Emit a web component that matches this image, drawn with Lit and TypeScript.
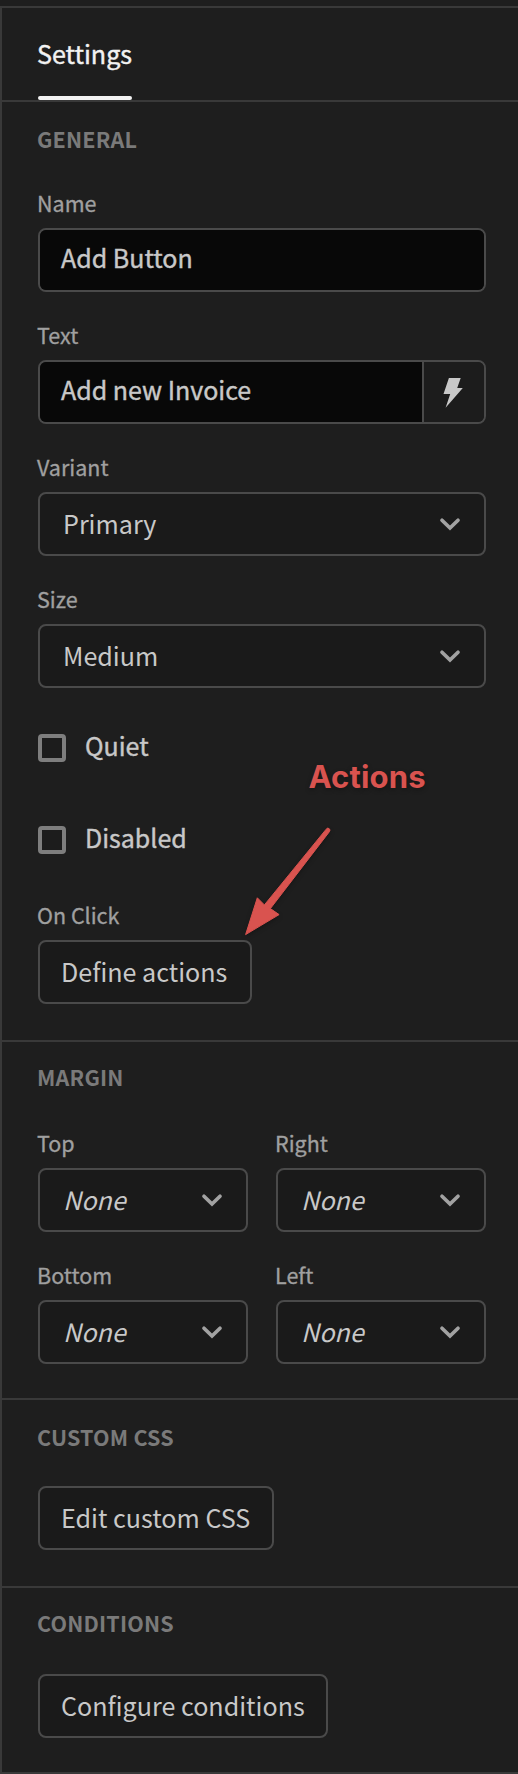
import { LitElement, html, css } from "lit";
import { customElement, property } from "lit/decorators.js";

const chevron = html`<svg class="chevron" width="22" height="14" viewBox="0 0 22 14">
  <path d="M3 3.2 L11 11 L19 3.2" fill="none" stroke="#a2a2a2" stroke-width="3.7" stroke-linecap="round" stroke-linejoin="miter"/>
</svg>`;

const field = css`
  :host { display: block; }
  .label {
    height: 31px;
    margin: 0 0 10px -1px;
    font-size: 21.5px;
    line-height: 31px;
    color: #a0a0a0;
    -webkit-text-stroke: 0.3px #a0a0a0;
    white-space: nowrap;
  }
  .box {
    box-sizing: border-box;
    display: flex;
    height: 64px;
    border: 2px solid #4a4a4a;
    border-radius: 8px;
    overflow: hidden;
    color: #c8c8c8;
    font-size: 25.1px;
    white-space: nowrap;
  }
`;

@customElement("text-field")
class TextField extends LitElement {
  @property() label = "";
  @property() value = "";
  @property({ type: Boolean }) bindable = false;
  static styles = [field, css`
    .value {
      flex: 1;
      background: #080808;
      padding-left: 21px;
      font-size: 25px;
      line-height: 54px;
      -webkit-text-stroke: 0.4px #c8c8c8;
    }
    .bind {
      display: flex;
      box-sizing: border-box;
      width: 62px;
      border-left: 2px solid #4a4a4a;
      background: #1c1c1c;
      padding: 16px 0 0 19px;
    }
  `];
  render() {
    return html`<div class="label">${this.label}</div>
      <div class="box">
        <div class="value">${this.value}</div>
        ${this.bindable ? html`<div class="bind">
          <svg width="20" height="30" viewBox="0 0 20 30"><path d="M5.9 0 H17.7 L14.2 10 H19.8 L2.6 29.8 L7.2 16 H0.5 Z" fill="#c8c8c8"/></svg>
        </div>` : ""}
      </div>`;
  }
}

@customElement("select-field")
class SelectField extends LitElement {
  @property() label = "";
  @property() value = "";
  @property({ type: Boolean }) placeholder = false;
  static styles = [field, css`
    .box {
      background: #1a1a1a;
      justify-content: space-between;
      padding: 0 23px 0 23px;
    }
    .value { line-height: 58px; }
    .placeholder { font-style: italic; }
    .chevron { margin-top: 23px; }
  `];
  render() {
    return html`<div class="label">${this.label}</div>
      <div class="box">
        <span class="value ${this.placeholder ? "placeholder" : ""}">${this.value}</span>${chevron}
      </div>`;
  }
}

@customElement("check-field")
class CheckField extends LitElement {
  @property() label = "";
  static styles = css`
    :host { display: flex; height: 36px; gap: 19px; }
    .check {
      box-sizing: border-box;
      width: 28px;
      height: 28px;
      margin-top: 7px;
      border: 4px solid #7e7e7e;
      border-radius: 4px;
      background: #1c1c1c;
    }
    .text {
      font-size: 25px;
      line-height: 36px;
      color: #c8c8c8;
      -webkit-text-stroke: 0.4px #c8c8c8;
    }
  `;
  render() {
    return html`<div class="check"></div><div class="text">${this.label}</div>`;
  }
}

@customElement("app-root")
class AppRoot extends LitElement {
  static styles = css`
    :host {
      display: block;
      position: relative;
      box-sizing: border-box;
      width: 518px;
      height: 1774px;
      padding-top: 6px;
      background: #1e1e1e;
      font-family: "Noto Sans CJK SC", "Source Sans Pro", sans-serif;
      overflow: hidden;
    }
    .panel {
      box-sizing: border-box;
      height: 1768px;
      border-top: 2px solid #393939;
      border-left: 2px solid #393939;
    }
    .tabs {
      display: flex;
      height: 92px;
      padding-left: 36px;
      border-bottom: 2px solid #393939;
    }
    .tab {
      box-sizing: border-box;
      display: flex;
      flex-direction: column;
      justify-content: space-between;
      width: 94px;
      padding-top: 27px;
      color: #f2f2f2;
      font-size: 25.1px;
      line-height: 36px;
    }
    .tab-text { margin-left: -1px; white-space: nowrap; -webkit-text-stroke: 0.4px #f2f2f2; }
    .indicator { height: 4px; border-radius: 2px; background: #f2f2f2; }
    .section {
      padding: 0 32px 36px 36px;
      border-bottom: 2px solid #393939;
    }
    .short { padding-bottom: 34px; }
    .heading {
      box-sizing: border-box;
      height: 85px;
      padding-top: 21px;
      margin-left: -1px;
      font-size: 21.5px;
      line-height: 31px;
      font-weight: 700;
      letter-spacing: 0.2px;
      color: #7a7a7a;
    }
    .raised { padding-top: 19px; }
    .tall { height: 86px; }
    .stack { display: flex; flex-direction: column; gap: 27px; }
    .checks { display: flex; flex-direction: column; gap: 56px; margin: 39px 0 44px; }
    .grid { display: grid; grid-template-columns: 1fr 1fr; gap: 27px 28px; }
    .label {
      margin: 0 0 10px -1px;
      font-size: 21.5px;
      line-height: 31px;
      color: #a0a0a0;
      -webkit-text-stroke: 0.3px #a0a0a0;
    }
    .button {
      box-sizing: border-box;
      height: 64px;
      padding-left: 21px;
      border: 2px solid #4a4a4a;
      border-radius: 8px;
      background: #1a1a1a;
      color: #c8c8c8;
      font-size: 25.1px;
      line-height: 58px;
      white-space: nowrap;
    }
    .define { width: 214px; }
    .edit { width: 236px; }
    .configure { width: 290px; }
    .note {
      position: absolute;
      left: 308.5px;
      top: 757px;
      font: 700 31px/40px Inter, sans-serif;
      letter-spacing: 0.15px;
      color: #d9534f;
      text-shadow: 0 2px 5px rgba(0, 0, 0, 0.3);
    }
    .arrow {
      position: absolute;
      left: 235px;
      top: 818px;
      filter: drop-shadow(0 2px 2px rgba(0, 0, 0, 0.25));
    }
  `;

  render() {
    return html`
      <div class="panel">
        <div class="tabs">
          <div class="tab"><span class="tab-text">Settings</span><div class="indicator"></div></div>
        </div>
        <div class="section">
          <div class="heading">GENERAL</div>
          <div class="stack">
            <text-field label="Name" value="Add Button"></text-field>
            <text-field label="Text" value="Add new Invoice" bindable></text-field>
            <select-field label="Variant" value="Primary"></select-field>
            <select-field label="Size" value="Medium"></select-field>
          </div>
          <div class="checks">
            <check-field label="Quiet"></check-field>
            <check-field label="Disabled"></check-field>
          </div>
          <div class="label">On Click</div>
          <div class="button define">Define actions</div>
        </div>
        <div class="section short">
          <div class="heading raised">MARGIN</div>
          <div class="grid">
            ${["Top", "Right", "Bottom", "Left"].map(
              (side) => html`<select-field label=${side} value="None" placeholder></select-field>`
            )}
          </div>
        </div>
        <div class="section">
          <div class="heading tall">CUSTOM CSS</div>
          <div class="button edit">Edit custom CSS</div>
        </div>
        <div class="section short">
          <div class="heading raised tall">CONDITIONS</div>
          <div class="button configure">Configure conditions</div>
        </div>
      </div>
      <div class="note">Actions</div>
      <svg class="arrow" width="105" height="125" viewBox="235 818 105 125">
        <path d="M245.6 934.6 L257.3 897.8 L264.4 904.9 L326.2 829.2 Q327.6 827.4 329.1 828.6 Q330.8 829.8 329.4 831.7 L270.4 908.6 L279.1 914.6 Z"
          fill="#d9534f" stroke="#d9534f" stroke-width="1" stroke-linejoin="round"/>
      </svg>
    `;
  }
}
